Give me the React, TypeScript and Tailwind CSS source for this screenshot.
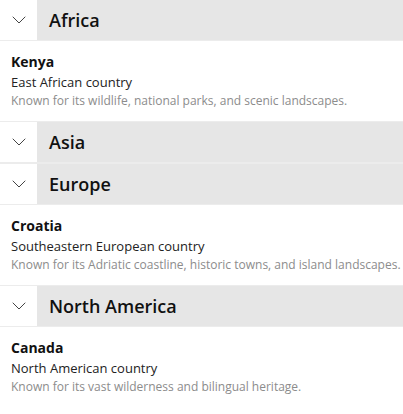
import { ChevronDown } from 'lucide-react';

const SECTIONS = [
  {
    title: 'Africa',
    open: true,
    name: 'Kenya',
    kind: 'East African country',
    note: 'Known for its wildlife, national parks, and scenic landscapes.',
  },
  { title: 'Asia', open: false },
  {
    title: 'Europe',
    open: true,
    name: 'Croatia',
    kind: 'Southeastern European country',
    note: 'Known for its Adriatic coastline, historic towns, and island landscapes.',
  },
  {
    title: 'North America',
    open: true,
    name: 'Canada',
    kind: 'North American country',
    note: 'Known for its vast wilderness and bilingual heritage.',
  },
];

export default function App() {
  return (
    <div className="w-[403px] h-[414px] bg-white overflow-hidden" style={{ fontFamily: '"Open Sans", "Noto Sans", sans-serif' }}>
      {SECTIONS.map(s => (
        <div key={s.title} className="border-b border-[#ececec] last:border-b-0">
          <div className="flex h-[41px] border-b border-[#ececec]">
            <div className="w-[37px] flex items-center justify-center text-[#444]">
              <ChevronDown size={24} strokeWidth={1} />
            </div>
            <div className="flex-1 bg-[#e6e6e6] flex items-center pl-[12px] text-[18px] font-semibold text-[#111]">
              {s.title}
            </div>
          </div>
          {s.open && (
            <div className="px-[11px] pt-[11px] pb-[11px]">
              <div className="text-[14px] leading-[20px] font-bold text-[#111]">{s.name}</div>
              <div className="text-[13px] leading-[20px] text-[#222]">{s.kind}</div>
              <div className="text-[12px] leading-[18px] text-[#8c8c8c] whitespace-nowrap">{s.note}</div>
            </div>
          )}
        </div>
      ))}
    </div>
  );
}
